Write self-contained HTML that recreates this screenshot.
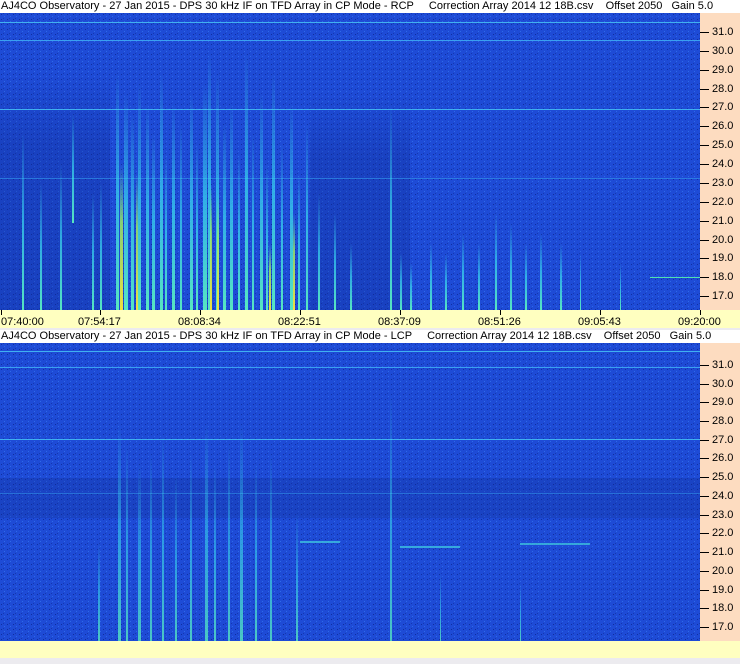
<!DOCTYPE html>
<html><head><style>
body{margin:0;width:740px;height:664px;overflow:hidden;background:#ecebef;font-family:"Liberation Sans",sans-serif;position:relative}
.t{position:absolute;left:0;width:740px;height:13px;background:#fff;font-size:11px;line-height:13px;color:#000;white-space:pre;padding-left:1px}
.ax{position:absolute;left:700px;width:40px;background:#fddcc0}
.lb{position:absolute;left:712px;font-size:11px;height:12px;line-height:12px;white-space:pre}
.lb::before{content:"";position:absolute;left:-12px;top:6px;width:9px;height:1px;background:#000}
.tm{position:absolute;top:310px;left:0;width:740px;height:18px;background:#ffffc0}
.tl{position:absolute;top:316px;font-size:11px}
.tk{position:absolute;top:310px;width:1px;height:5px;background:#000}
svg{position:absolute;left:0}
</style></head><body>
<div class="t" style="top:0">AJ4CO Observatory - 27 Jan 2015 - DPS 30 kHz IF on TFD Array in CP Mode - RCP     Correction Array 2014 12 18B.csv    Offset 2050   Gain 5.0</div>
<svg style="top:13px" width="700" height="297" viewBox="0 0 700 297">
<defs>
<linearGradient id="g" x1="0" y1="0" x2="0" y2="1"><stop offset="0" stop-color="#3ad8f0" stop-opacity="0"/><stop offset="0.5" stop-color="#3ad8f0" stop-opacity="0.7"/><stop offset="1" stop-color="#5af0c0" stop-opacity="0.95"/></linearGradient>
<linearGradient id="y" x1="0" y1="0" x2="0" y2="1"><stop offset="0" stop-color="#60f0b0" stop-opacity="0"/><stop offset="0.4" stop-color="#a0f060" stop-opacity="0.8"/><stop offset="1" stop-color="#f0e040"/></linearGradient>
<linearGradient id="d" x1="0" y1="0" x2="0" y2="1"><stop offset="0" stop-color="#0e2a90" stop-opacity="0"/><stop offset="0.3" stop-color="#0e2a90" stop-opacity="0.3"/><stop offset="1" stop-color="#0e2a90" stop-opacity="0.3"/></linearGradient>
<pattern id="n" width="6" height="5" patternUnits="userSpaceOnUse"><rect width="6" height="5" fill="#1e4bd6"/><rect x="1" y="1" width="1" height="1" fill="#0f2e9e"/><rect x="4" y="3" width="1" height="1" fill="#2e6ae8"/><rect x="3" y="0" width="1" height="1" fill="#1538b0"/></pattern>
</defs>
<rect width="700" height="297" fill="url(#n)"/>
<rect x="0" y="60" width="110" height="237" fill="url(#d)"/>
<rect x="310" y="80" width="100" height="217" fill="url(#d)"/>
<rect x="0" y="9" width="700" height="1" fill="#40b0f0"/>
<rect x="0" y="27" width="700" height="1" fill="#3aa0f0"/>
<rect x="0" y="96" width="700" height="1" fill="#40b0f0"/>
<rect x="0" y="165" width="700" height="1" fill="#3090e8" opacity=".7"/>
<g fill="url(#g)">
<rect x="116" y="60" width="3" height="237"/><rect x="124" y="80" width="4" height="217"/><rect x="131" y="100" width="3" height="197"/><rect x="138" y="70" width="3" height="227"/><rect x="146" y="90" width="3" height="207"/><rect x="152" y="120" width="3" height="177"/><rect x="160" y="60" width="3" height="237"/><rect x="165" y="140" width="2" height="157"/><rect x="172" y="90" width="3" height="207"/><rect x="180" y="110" width="2" height="187"/><rect x="190" y="80" width="3" height="217"/><rect x="196" y="130" width="2" height="167"/><rect x="203" y="70" width="4" height="227"/><rect x="208" y="40" width="3" height="257"/><rect x="216" y="60" width="3" height="237"/><rect x="223" y="110" width="3" height="187"/><rect x="230" y="90" width="3" height="207"/><rect x="238" y="140" width="2" height="157"/><rect x="245" y="40" width="3" height="257"/><rect x="252" y="120" width="2" height="177"/><rect x="260" y="80" width="3" height="217"/><rect x="266" y="150" width="2" height="147"/><rect x="272" y="60" width="3" height="237"/><rect x="281" y="130" width="2" height="167"/><rect x="290" y="90" width="3" height="207"/><rect x="298" y="160" width="2" height="137"/><rect x="306" y="110" width="2" height="187"/><rect x="318" y="180" width="2" height="117"/><rect x="334" y="200" width="2" height="97"/><rect x="350" y="230" width="2" height="67"/>
<rect x="22" y="120" width="2" height="177"/><rect x="40" y="170" width="2" height="127"/><rect x="60" y="150" width="2" height="147"/><rect x="72" y="100" width="2" height="110"/><rect x="92" y="180" width="2" height="117"/><rect x="100" y="170" width="2" height="127"/>
<rect x="390" y="90" width="2" height="207"/><rect x="400" y="240" width="2" height="57"/><rect x="410" y="250" width="2" height="47"/><rect x="430" y="230" width="2" height="67"/><rect x="445" y="240" width="2" height="57"/><rect x="462" y="220" width="2" height="77"/><rect x="478" y="230" width="2" height="67"/><rect x="495" y="200" width="2" height="97"/><rect x="510" y="210" width="2" height="87"/><rect x="525" y="230" width="2" height="67"/><rect x="540" y="220" width="2" height="77"/><rect x="560" y="230" width="2" height="67"/><rect x="580" y="240" width="1" height="57"/><rect x="620" y="250" width="1" height="47"/>
</g>
<g fill="url(#y)">
<rect x="120" y="150" width="3" height="147"/><rect x="136" y="160" width="2" height="137"/><rect x="210" y="170" width="2" height="127"/><rect x="217" y="180" width="2" height="117"/><rect x="293" y="200" width="2" height="97"/><rect x="269" y="230" width="2" height="67"/>
</g>
<rect x="650" y="264" width="50" height="1" fill="#50e0b0"/>
</svg>
<div class="ax" style="top:13px;height:297px"></div>
<div class="tm"></div>
<div class="tk" style="left:1px"></div><div class="tk" style="left:100px"></div><div class="tk" style="left:200px"></div><div class="tk" style="left:300px"></div><div class="tk" style="left:400px"></div><div class="tk" style="left:500px"></div><div class="tk" style="left:600px"></div><div class="tk" style="left:700px"></div>
<div class="tl" style="left:1px">07:40:00</div><div class="tl" style="left:78px">07:54:17</div><div class="tl" style="left:178px">08:08:34</div><div class="tl" style="left:278px">08:22:51</div><div class="tl" style="left:378px">08:37:09</div><div class="tl" style="left:478px">08:51:26</div><div class="tl" style="left:578px">09:05:43</div><div class="tl" style="left:678px">09:20:00</div>

<div class="t" style="top:330px">AJ4CO Observatory - 27 Jan 2015 - DPS 30 kHz IF on TFD Array in CP Mode - LCP     Correction Array 2014 12 18B.csv    Offset 2050   Gain 5.0</div>
<svg style="top:343px" width="700" height="298" viewBox="0 0 700 298">
<rect width="700" height="298" fill="url(#n)"/>
<rect x="0" y="135" width="700" height="40" fill="#0e2a90" opacity="0.25"/>
<rect x="0" y="8" width="700" height="1" fill="#40b0f0"/><rect x="0" y="24" width="700" height="1" fill="#3aa0f0"/><rect x="0" y="96" width="700" height="1" fill="#40b0f0"/><rect x="0" y="150" width="700" height="1" fill="#3090e8" opacity=".6"/>
<g fill="url(#g)" opacity="0.8">
<rect x="118" y="80" width="3" height="218"/><rect x="126" y="100" width="2" height="198"/><rect x="138" y="120" width="3" height="178"/><rect x="150" y="110" width="2" height="188"/><rect x="162" y="90" width="2" height="208"/><rect x="175" y="130" width="2" height="168"/><rect x="190" y="110" width="2" height="188"/><rect x="205" y="80" width="3" height="218"/><rect x="214" y="120" width="2" height="178"/><rect x="228" y="100" width="2" height="198"/><rect x="240" y="80" width="3" height="218"/><rect x="255" y="120" width="2" height="178"/><rect x="270" y="110" width="2" height="188"/><rect x="296" y="170" width="2" height="128"/><rect x="390" y="50" width="2" height="248"/><rect x="98" y="200" width="2" height="98"/><rect x="440" y="230" width="1" height="68"/><rect x="520" y="240" width="1" height="58"/>
</g>
<g fill="#40d0e0" opacity="0.7"><rect x="300" y="198" width="40" height="2"/><rect x="400" y="203" width="60" height="2"/><rect x="520" y="200" width="70" height="2"/></g>
</svg>
<div class="ax" style="top:343px;height:298px"></div>
<div style="position:absolute;top:641px;left:0;width:740px;height:17px;background:#ffffc0"></div>

<div class="lb" style="top:26px">31.0</div><div class="lb" style="top:45px">30.0</div><div class="lb" style="top:64px">29.0</div><div class="lb" style="top:83px">28.0</div><div class="lb" style="top:101px">27.0</div><div class="lb" style="top:120px">26.0</div><div class="lb" style="top:139px">25.0</div><div class="lb" style="top:158px">24.0</div><div class="lb" style="top:177px">23.0</div><div class="lb" style="top:196px">22.0</div><div class="lb" style="top:215px">21.0</div><div class="lb" style="top:234px">20.0</div><div class="lb" style="top:252px">19.0</div><div class="lb" style="top:271px">18.0</div><div class="lb" style="top:290px">17.0</div>
<div class="lb" style="top:359px">31.0</div><div class="lb" style="top:378px">30.0</div><div class="lb" style="top:396px">29.0</div><div class="lb" style="top:415px">28.0</div><div class="lb" style="top:434px">27.0</div><div class="lb" style="top:452px">26.0</div><div class="lb" style="top:471px">25.0</div><div class="lb" style="top:490px">24.0</div><div class="lb" style="top:509px">23.0</div><div class="lb" style="top:527px">22.0</div><div class="lb" style="top:546px">21.0</div><div class="lb" style="top:565px">20.0</div><div class="lb" style="top:584px">19.0</div><div class="lb" style="top:602px">18.0</div><div class="lb" style="top:621px">17.0</div>
</body></html>
